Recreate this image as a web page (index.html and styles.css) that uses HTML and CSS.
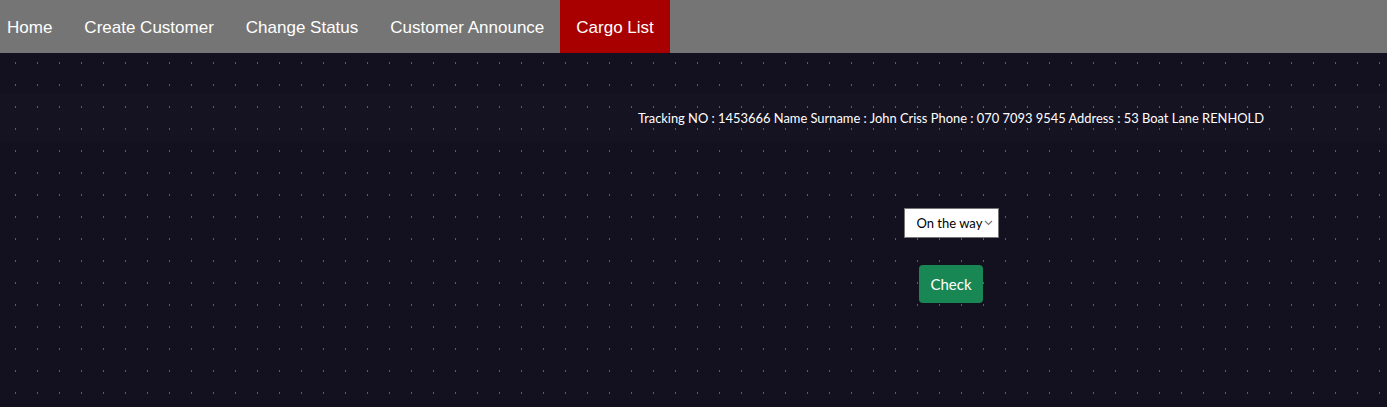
FILE: index.html
```html
<!DOCTYPE html>
<html lang="en">
<head>
<meta charset="utf-8">
<title>Cargo List</title>
<link rel="stylesheet" href="styles.css">
</head>
<body>
<nav class="topnav">
  <a class="nav-link" href="#">Home</a>
  <a class="nav-link" href="#">Create Customer</a>
  <a class="nav-link" href="#">Change Status</a>
  <a class="nav-link" href="#">Customer Announce</a>
  <a class="nav-link active" href="#">Cargo List</a>
</nav>
<main class="content">
  <div class="info-row"><span class="info-text">Tracking NO : 1453666 Name Surname : John Criss Phone : 070 7093 9545 Address : 53 Boat Lane RENHOLD</span></div>
  <div class="form-col">
    <label class="select-wrap">
      <select class="status">
        <option>On the way</option>
        <option>Delivered</option>
        <option>Preparing</option>
      </select>
      <svg class="chev" width="9" height="6" viewBox="0 0 9 6"><path d="M1 1 L4.5 4.5 L8 1" fill="none" stroke="#7a7a7a" stroke-width="1.2"/></svg>
    </label>
    <button class="check-btn" type="button">Check</button>
  </div>
</main>
</body>
</html>
```
FILE: styles.css
```css
html, body {
  margin: 0;
  padding: 0;
}
body {
  min-height: 407px;
  background-color: #13101f;
  background-image: conic-gradient(from 90deg at 1px 2px, transparent 0deg 180deg, #5d5a72 180deg 270deg, transparent 270deg);
  background-size: 22px 22px;
  background-position: 15px 18px;
  font-family: "Lato", "Liberation Sans", sans-serif;
  color: #fff;
}
.topnav {
  display: flex;
  height: 53px;
  background: #757575;
}
.nav-link {
  display: block;
  padding: 2px 16px 0;
  line-height: 51px;
  font-family: "Liberation Sans", Arial, sans-serif;
  font-size: 17px;
  color: #fff;
  text-decoration: none;
}
.nav-link:first-child {
  padding-left: 7px;
}
.nav-link.active {
  background: #a80000;
}
.content {
  display: flex;
  flex-direction: column;
}
.info-row {
  margin-top: 40px;
  height: 50px;
  display: flex;
  align-items: center;
  justify-content: center;
  padding-left: 515px;
  background: rgba(255,255,255,0.012);
}
.info-text {
  font-size: 12.9px;
  white-space: nowrap;
}
.form-col {
  display: flex;
  flex-direction: column;
  align-items: center;
  padding-left: 515px;
}
.select-wrap {
  margin-top: 65px;
  display: flex;
  align-items: center;
  box-sizing: border-box;
  width: 95px;
  height: 30px;
  background: #fff;
  border: 1px solid #767676;
  padding: 0 5px 0 0;
}
.status {
  appearance: none;
  -webkit-appearance: none;
  border: none;
  outline: none;
  background: transparent;
  flex: 1;
  min-width: 0;
  padding: 0 0 0 12px;
  font-family: "Lato", "Liberation Sans", sans-serif;
  font-size: 13px;
  color: #000;
}
.chev {
  flex: none;
}
.check-btn {
  margin-top: 27px;
  width: 64px;
  height: 38px;
  border: none;
  border-radius: 4px;
  background: #198754;
  color: #fff;
  font-family: "Lato", "Liberation Sans", sans-serif;
  font-size: 15px;
  padding: 0;
}
```
